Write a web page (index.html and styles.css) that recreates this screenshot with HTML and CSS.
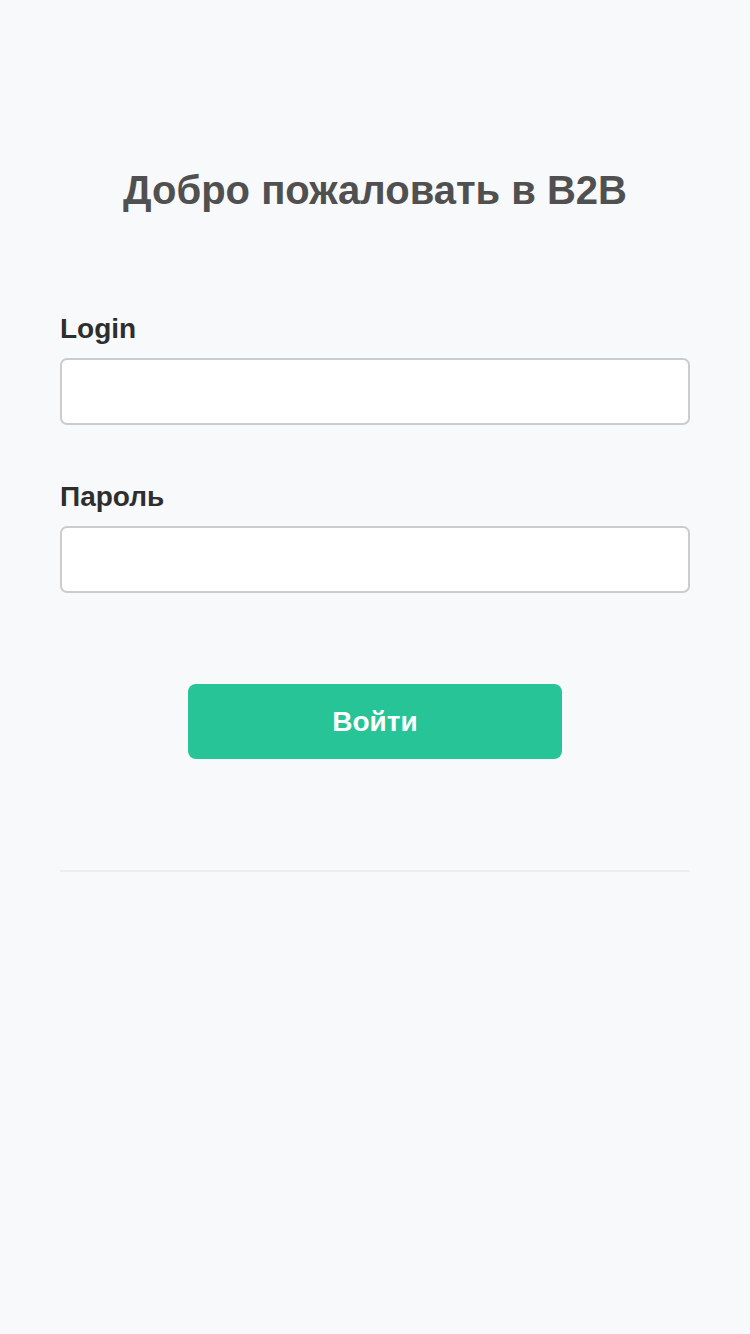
FILE: index.html
```html
<!DOCTYPE html>
<html lang="ru">
<head>
<meta charset="utf-8">
<link rel="stylesheet" href="styles.css">
</head>
<body>
<main class="page">
  <h1 class="title">Добро пожаловать в B2B</h1>
  <form class="form">
    <div class="field">
      <label class="label" for="login">Login</label>
      <input class="input" id="login" type="text">
    </div>
    <div class="field">
      <label class="label" for="pass">Пароль</label>
      <input class="input" id="pass" type="password">
    </div>
    <div class="actions">
      <button class="btn" type="button">Войти</button>
    </div>
  </form>
  <hr class="divider">
</main>
</body>
</html>
```

FILE: styles.css
```css
* { box-sizing: border-box; }
html, body {
  margin: 0;
  padding: 0;
  background: #f8f9fb;
  font-family: "Liberation Sans", Arial, sans-serif;
}
.page {
  padding: 160px 60px 0;
  min-height: 1334px;
}
.title {
  margin: 0;
  text-align: center;
  font-size: 40px;
  line-height: 60px;
  font-weight: 700;
  color: #505050;
}
.form {
  margin-top: 92px;
  display: flex;
  flex-direction: column;
}
.field {
  display: flex;
  flex-direction: column;
  margin-bottom: 55px;
}
.label {
  font-size: 28px;
  font-weight: 700;
  color: #2e2e2e;
  line-height: 34px;
  margin-bottom: 12px;
}
.input {
  height: 67px;
  width: 100%;
  border: 2px solid #cccccc;
  border-radius: 7px;
  background: #ffffff;
  font-size: 26px;
  padding: 0 16px;
  outline: none;
}
.actions {
  display: flex;
  justify-content: center;
  margin-top: 36px;
}
.btn {
  width: 374px;
  height: 75px;
  border: none;
  border-radius: 8px;
  background: #26c496;
  color: #ffffff;
  font-family: "Liberation Sans", Arial, sans-serif;
  font-size: 28px;
  font-weight: 700;
}
.divider {
  margin: 111px 0 0;
  border: none;
  height: 2px;
  background: #eceef1;
}
```
